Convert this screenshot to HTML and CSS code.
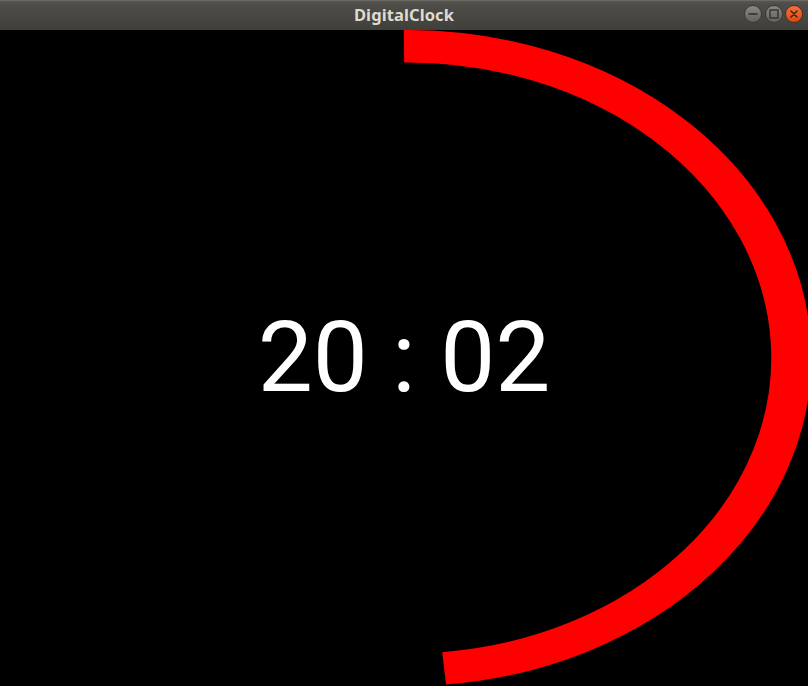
FILE: index.html
```html
<!DOCTYPE html>
<html>
<head>
<meta charset="utf-8">
<link rel="stylesheet" href="styles.css">
</head>
<body>
<div class="window">
  <div class="titlebar">
    <div class="title">DigitalClock</div>
    <div class="buttons">
      <span class="btn btn-min"><svg width="18" height="18" viewBox="0 0 18 18"><line x1="4.5" y1="9" x2="13.5" y2="9" stroke="#34332f" stroke-width="1.6"/></svg></span>
      <span class="btn btn-max"><svg width="18" height="18" viewBox="0 0 18 18"><rect x="5" y="5" width="8" height="8" fill="none" stroke="#34332f" stroke-width="1.4"/></svg></span>
      <span class="btn btn-close"><svg width="18" height="18" viewBox="0 0 18 18"><path d="M6 6 L12 12 M12 6 L6 12" stroke="#3a2a20" stroke-width="1.6" stroke-linecap="round"/></svg></span>
    </div>
  </div>
  <div class="clock">
    <svg class="ring" viewBox="0 0 656 656" preserveAspectRatio="none">
      <path d="M328 16.25 A311.75 311.75 0 0 1 360.59 638.3" fill="none" stroke="#ff0000" stroke-width="32.5" stroke-linecap="butt"/>
    </svg>
    <div class="time">20 : 02</div>
  </div>
</div>
</body>
</html>
```

FILE: styles.css
```css
html, body {
  margin: 0;
  padding: 0;
  background: #000;
}

.window {
  width: 808px;
  height: 686px;
  display: flex;
  flex-direction: column;
  overflow: hidden;
}

.titlebar {
  height: 30px;
  flex: none;
  position: relative;
  display: flex;
  align-items: center;
  justify-content: center;
  background: linear-gradient(#5c5a54 0px, #4f4d48 4px, #403f3a 100%);
  box-shadow: inset 0 1px 0 #6a6862;
}

.title {
  font-family: "Noto Sans", "DejaVu Sans", sans-serif;
  font-weight: 700;
  font-size: 16.5px;
  color: #dfdbd2;
  line-height: 30px;
  letter-spacing: 0.1px;
}

.buttons {
  position: absolute;
  right: 5px;
  top: 5px;
  display: flex;
  gap: 2.5px;
}

.btn {
  width: 18px;
  height: 18px;
  border-radius: 50%;
  display: flex;
  align-items: center;
  justify-content: center;
  box-sizing: border-box;
  border: 1px solid #3a3935;
}

.btn svg {
  display: block;
  margin: -1px;
}

.btn-min, .btn-max {
  background: linear-gradient(#8a8984, #62615c);
}

.btn-close {
  background: linear-gradient(#f5713a, #dd4814);
  border-color: #4a3328;
}

.clock {
  flex: 1;
  position: relative;
  display: grid;
  place-items: center;
  background: #000;
}

.ring {
  position: absolute;
  left: 0;
  top: 0;
  width: 808px;
  height: 656px;
}

.time {
  font-family: Roboto, "Noto Sans", sans-serif;
  font-size: 98px;
  color: #fff;
  line-height: 1;
  position: relative;
  top: 0px;
}
```
